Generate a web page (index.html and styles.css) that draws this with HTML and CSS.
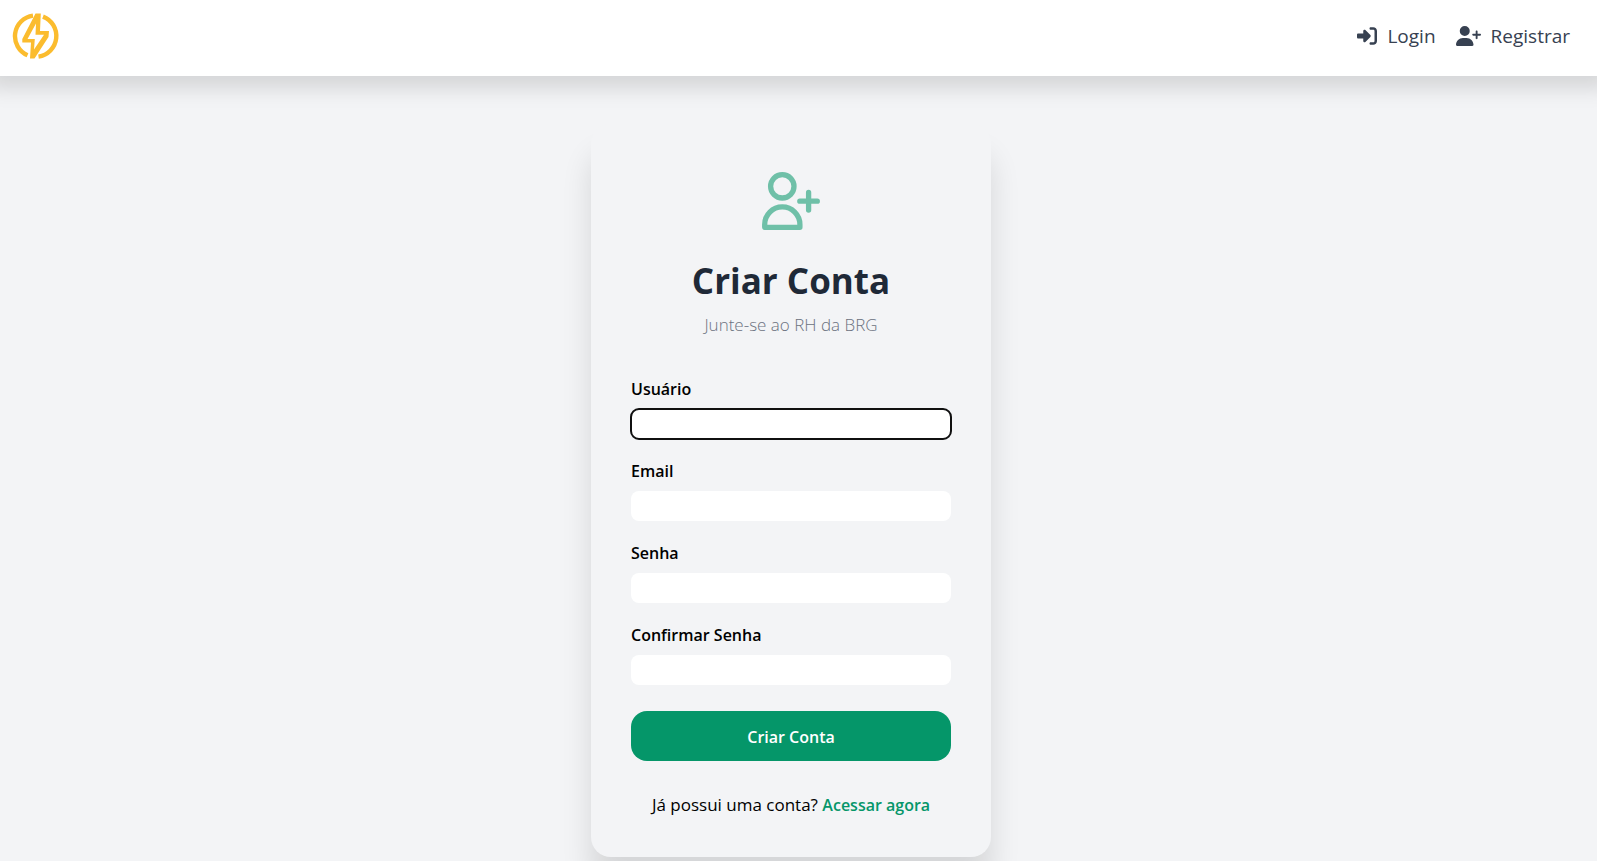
FILE: index.html
```html
<!DOCTYPE html>
<html lang="pt-BR">
<head>
<meta charset="utf-8">
<title>Criar Conta</title>
<meta name="viewport" content="width=device-width, initial-scale=1">
<link rel="stylesheet" href="styles.css">
</head>
<body>
<header class="navbar">
  <a class="brand" href="#" aria-label="Início">
    <svg class="brand-logo" viewBox="0 0 48 48" fill="none" stroke="#fbbc2e" stroke-width="4.4" aria-hidden="true">
      <path d="M21 3.600A20.800 20.800 0 0 0 15.500 43.300"/>
      <path d="M31 4.600A20.800 20.800 0 0 1 26.500 44.600"/>
      <path fill="#fbbc2e" stroke="none" fill-rule="evenodd" d="M23.500 1.500H28.800L28 19H37L36.500 25L22.500 46.500H18L19 30.500H10.300V27ZM24 11.500L15.500 27H22.800L22 37.500L32 22.800H23.500Z"/>
    </svg>
  </a>
  <nav class="nav-links">
    <a class="nav-link" href="#">
      <svg class="icon-login" viewBox="0 0 512 512" fill="currentColor" aria-hidden="true"><path d="M352 96l64 0c17.700 0 32 14.300 32 32l0 256c0 17.700-14.300 32-32 32l-64 0c-17.700 0-32 14.300-32 32s14.300 32 32 32l64 0c53 0 96-43 96-96l0-256c0-53-43-96-96-96l-64 0c-17.700 0-32 14.300-32 32s14.300 32 32 32zm-9.400 182.600c12.500-12.500 12.500-32.800 0-45.300l-128-128c-9.200-9.200-22.900-11.900-34.900-6.900s-19.800 16.600-19.800 29.600l0 64L32 192c-17.700 0-32 14.300-32 32l0 64c0 17.700 14.300 32 32 32l128 0 0 64c0 12.900 7.800 24.600 19.800 29.600s25.700 2.200 34.900-6.900l128-128z"/></svg>
      Login
    </a>
    <a class="nav-link" href="#">
      <svg class="icon-register" viewBox="0 0 640 512" fill="currentColor" aria-hidden="true"><path d="M96 128a128 128 0 1 1 256 0A128 128 0 1 1 96 128zM0 482.300C0 383.800 79.800 304 178.300 304l91.400 0C368.200 304 448 383.800 448 482.300c0 16.400-13.300 29.700-29.700 29.700L29.700 512C13.300 512 0 498.700 0 482.300zM504 312l0-64-64 0c-13.300 0-24-10.700-24-24s10.700-24 24-24l64 0 0-64c0-13.300 10.700-24 24-24s24 10.700 24 24l0 64 64 0c13.300 0 24 10.700 24 24s-10.700 24-24 24l-64 0 0 64c0 13.300-10.700 24-24 24s-24-10.700-24-24z"/></svg>
      Registrar
    </a>
  </nav>
</header>
<main class="page">
  <section class="card">
    <svg class="card-icon" viewBox="0 0 64 64" fill="none" stroke="#059669" stroke-width="5.3" stroke-linecap="round" stroke-linejoin="round" aria-hidden="true">
      <circle cx="23.300" cy="17.300" r="11.700"/>
      <path d="M5.700 58.300V55.500a17.600 17.600 0 0 1 35.200 0v2.800z"/>
      <path d="M40.800 32.200H58.300M49.600 23.400V41"/>
    </svg>
    <h1 class="title">Criar Conta</h1>
    <p class="subtitle">Junte-se ao RH da BRG</p>
    <form class="form">
      <div class="field">
        <label for="username">Usuário</label>
        <input class="input input-active" id="username" type="text">
      </div>
      <div class="field">
        <label for="email">Email</label>
        <input class="input" id="email" type="email">
      </div>
      <div class="field">
        <label for="password">Senha</label>
        <input class="input" id="password" type="password">
      </div>
      <div class="field">
        <label for="confirm">Confirmar Senha</label>
        <input class="input" id="confirm" type="password">
      </div>
      <button class="submit" type="submit">Criar Conta</button>
    </form>
    <p class="footer-text">Já possui uma conta? <a class="footer-link" href="#">Acessar agora</a></p>
  </section>
</main>
</body>
</html>
```
FILE: styles.css
```css
* {
  box-sizing: border-box;
}

body {
  margin: 0;
  background: #f3f4f6;
  color: #000;
  font-family: "Open Sans", "Noto Sans", sans-serif;
  font-size: 16px;
  line-height: 24px;
}

.navbar {
  display: flex;
  align-items: center;
  justify-content: space-between;
  padding: 12px 27px 16px 12px;
  background: #fff;
  box-shadow: 0 0 20px 12px rgba(0, 0, 0, 0.13);
}

.brand,
.brand-logo {
  display: block;
}

.brand-logo {
  width: 48px;
  height: 48px;
}

.nav-links {
  display: flex;
  gap: 20px;
}

.nav-link {
  display: flex;
  align-items: center;
  gap: 10px;
  color: #374151;
  font-size: 19px;
  text-decoration: none;
}

.icon-login {
  width: 20px;
  height: 20px;
}

.icon-register {
  width: 25px;
  height: 20px;
}

.page {
  display: flex;
  justify-content: center;
  padding: 48px 15px 5px 0;
}

.card {
  display: flex;
  flex-direction: column;
  width: 100%;
  max-width: 400px;
  padding: 45px 40px 40px;
  border-radius: 20px;
  background: #f3f4f6;
  box-shadow: 0 30px 30px rgba(0, 0, 0, 0.12);
}

.card-icon {
  align-self: center;
  width: 64px;
  height: 64px;
  margin-bottom: 24px;
  opacity: 0.55;
}

.title {
  margin: 0 0 8px;
  color: #1f2937;
  font-size: 35px;
  font-weight: 700;
  line-height: 48px;
  text-align: center;
}

.subtitle {
  margin: 0 0 40px;
  color: #6b7280;
  font-size: 17px;
  font-weight: 300;
  text-align: center;
}

.form {
  display: flex;
  flex-direction: column;
  gap: 20px;
}

.field {
  display: flex;
  flex-direction: column;
  gap: 8px;
}

.field label {
  font-weight: 600;
}

.input {
  width: 100%;
  height: 30px;
  padding: 0 8px;
  border: 0;
  border-radius: 8px;
  background: #fff;
  font: inherit;
}

.input:focus,
.input-active {
  outline: 2px solid #101010;
  outline-offset: -1px;
}

.submit {
  height: 50px;
  margin-top: 6px;
  padding: 2px 16px 0;
  border: 0;
  border-radius: 16px;
  background: #059669;
  color: #fff;
  font: inherit;
  font-weight: 600;
}

.footer-text {
  margin: 32px 0 0;
  font-size: 17px;
  text-align: center;
}

.footer-link {
  color: #059669;
  font-size: 16px;
  font-weight: 600;
  text-decoration: none;
}
```
